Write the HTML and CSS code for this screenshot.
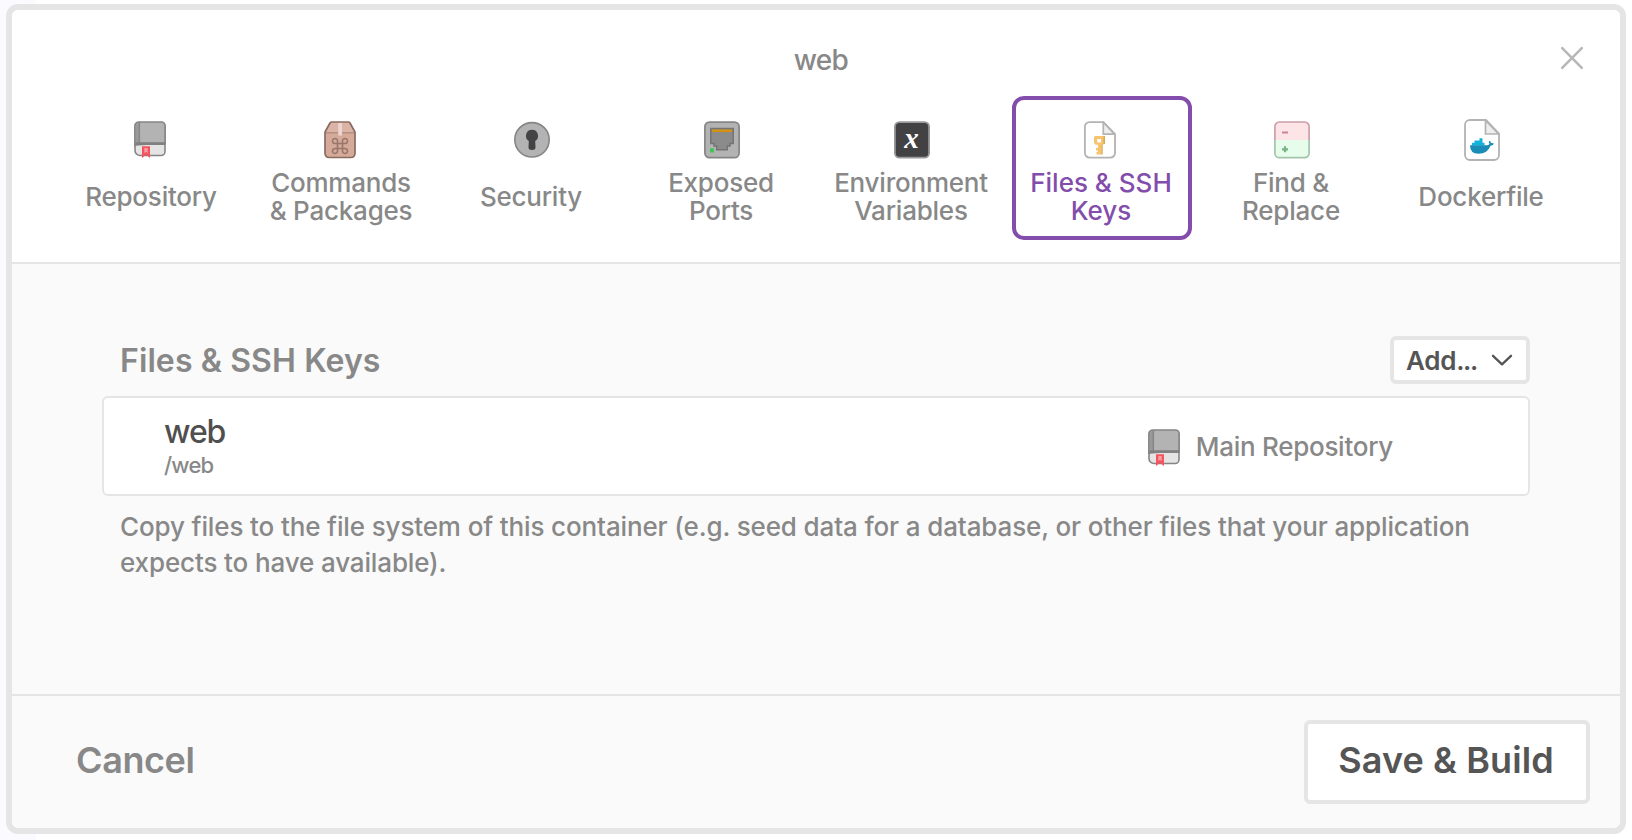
FILE: index.html
```html
<!DOCTYPE html>
<html lang="en">
<head>
<meta charset="utf-8">
<title>web</title>
<link rel="stylesheet" href="styles.css">
</head>
<body>
<svg class="defs" width="0" height="0" aria-hidden="true">
  <symbol id="book" viewBox="0 0 32 38">
    <path d="M1 24V29.500a5 5 0 0 0 5 5H27a4 4 0 0 0 4-4V22z" fill="#e4e4e4" stroke="#858585" stroke-width="1.600"/>
    <path d="M5 1H27.500a3.600 3.600 0 0 1 3.600 3.600V22.600H4.500Q2 22.600 .9 25V5A4 4 0 0 1 5 1z" fill="#b3b3b3" stroke="#858585" stroke-width="1.700"/>
    <path d="M2 4.500Q2.500 2 4.800 2V21.500L2 22.500z" fill="#999"/>
    <path d="M5.300 1V22" stroke="#858585" stroke-width="1.500"/>
    <path d="M1.500 22.600H31" stroke="#808080" stroke-width="2.600"/>
    <path d="M8 25.200H16V37L12 33.800 8 37z" fill="#f5535d"/>
    <path d="M10.300 27H13.700V32.300L12 30.800 10.300 32.300z" fill="#f7a0a4"/>
  </symbol>
</svg>
<main class="modal">
  <header class="head">
    <div class="bar">
      <h1 class="title">web</h1>
      <button class="close" aria-label="Close"><svg width="24" height="24" viewBox="0 0 24 24"><path d="M2.200 2.200L21.800 21.800M21.800 2.200L2.200 21.800" stroke="#b8b8b8" stroke-width="2.600" stroke-linecap="round"/></svg></button>
    </div>
    <nav class="tabs">
      <a class="tab"><span class="icon"><svg width="32" height="38"><use href="#book"/></svg></span><span class="label">Repository</span></a>
      <a class="tab"><span class="icon"><svg width="32" height="38" viewBox="0 0 32 38">
        <path d="M7 1H25L31 11.500V32.500a4 4 0 0 1-4 4H5a4 4 0 0 1-4-4V11.500z" fill="#d5aa99"/>
        <path d="M7 1H25L31 11.500H1z" fill="#dcb4a7"/>
        <path d="M1 11.800H31" stroke="#b58f82" stroke-width="1.500"/>
        <path d="M14.200 1.500h3.800V14.500h-3.800z" fill="#ecd5cd"/>
        <path d="M8 1H24.500Q25.500 1 26 2L31 11V32.500a4 4 0 0 1-4 4H5a4 4 0 0 1-4-4V11L6 2Q6.500 1 8 1z" fill="none" stroke="#8a6b61" stroke-width="1.700"/>
        <path d="M13.500 22.500h5v5h-5zM13.500 22.500h-2.400a2.500 2.500 0 1 1 2.400-2.500zM18.500 22.500V20a2.500 2.500 0 1 1 2.400 2.500zM18.500 27.500h2.400a2.500 2.500 0 1 1-2.400 2.500zM13.500 27.500V30a2.500 2.500 0 1 1-2.400-2.500z" fill="none" stroke="#98766b" stroke-width="1.600"/>
      </svg></span><span class="label">Commands<br>&amp; Packages</span></a>
      <a class="tab"><span class="icon"><svg width="36" height="38" viewBox="0 0 36 38">
        <circle cx="18" cy="18.800" r="17.200" fill="#b3b3b3" stroke="#858585" stroke-width="1.600"/>
        <path d="M18 8.800a6 6 0 0 1 3.200 11.100L21.500 26.500q0 2.500-3.500 2.500t-3.500-2.500L14.800 19.900A6 6 0 0 1 18 8.800z" fill="#434345"/>
      </svg></span><span class="label">Security</span></a>
      <a class="tab"><span class="icon"><svg width="36" height="38" viewBox="0 0 36 38">
        <rect x=".9" y="1.100" width="34.200" height="35.600" rx="4.500" fill="#b3b3b3" stroke="#858585" stroke-width="1.700"/>
        <path d="M6.800 7.500H29.200V22.500H26V25H23.300V28.800H12.700V25H10V22.500H6.800z" fill="#8b8b8b" stroke="#747474" stroke-width="1.500"/>
        <path d="M8 8.600H28v2.400H8z" fill="#d6920e"/><path d="M6 27.200h4v4.200H6z" fill="#3fc65b"/>
      </svg></span><span class="label">Exposed<br>Ports</span></a>
      <a class="tab"><span class="icon"><svg width="36" height="38" viewBox="0 0 36 38">
        <rect x=".9" y="1.100" width="34.200" height="35.600" rx="4.500" fill="#424244" stroke="#9a9a9b" stroke-width="1.800"/>
        <text class="glyph" x="17.500" y="27" text-anchor="middle">x</text>
      </svg></span><span class="label">Environment<br>Variables</span></a>
      <a class="tab active"><span class="icon"><svg width="32" height="38" viewBox="0 0 32 38">
        <path d="M5.500 1.100H19.500L31 13V32a4.600 4.600 0 0 1-4.600 4.600H5.500A4.600 4.600 0 0 1 .9 32V5.700A4.600 4.600 0 0 1 5.500 1.100z" fill="#fff" stroke="#b3b3b3" stroke-width="1.800"/>
        <path d="M19.300 1.500V13.200H30.600z" fill="#eee" stroke="#b3b3b3" stroke-width="1.700"/>
        <path d="M12 15H21V23H18.700V33.500H17V15z" fill="#d6a75b"/>
        <path d="M11 15H19.500V23.800H17.700V33.500H12.500V30.800H14V29.500H12V27H14V23.800H11.500L10 22V16z" fill="#f7c36d"/>
        <path d="M13.200 18h3.800v3.500h-3.800z" fill="#fff"/>
      </svg></span><span class="label">Files &amp; SSH<br>Keys</span></a>
      <a class="tab"><span class="icon"><svg width="36" height="38" viewBox="0 0 36 38">
        <path d="M.9 19V5.500A4.500 4.500 0 0 1 5.400 1H30.600a4.500 4.500 0 0 1 4.500 4.500V19" fill="#fde4e6" stroke="#cc9fa8" stroke-width="1.700"/>
        <path d="M.9 19V32.200a4.500 4.500 0 0 0 4.500 4.500H30.600a4.500 4.500 0 0 0 4.500-4.500V19" fill="#e7fdec" stroke="#a3c5aa" stroke-width="1.700"/>
        <path d="M8 11.600h6" stroke="#c98391" stroke-width="2"/><path d="M8 28.300h6M11 25.300v6" stroke="#79b284" stroke-width="2.200"/>
      </svg></span><span class="label">Find &amp;<br>Replace</span></a>
      <a class="tab"><span class="icon"><svg width="36" height="42" viewBox="0 0 36 42">
        <path d="M6 1H22L35 14.500V36a5 5 0 0 1-5 5H6a5 5 0 0 1-5-5V6a5 5 0 0 1 5-5z" fill="#fff" stroke="#b3b3b3" stroke-width="1.800"/>
        <path d="M21.500 1.500V15H34.600z" fill="#eee" stroke="#b3b3b3" stroke-width="1.700"/>
        <path d="M8 26.500V23.800H10.500V21.500H15.500V19.300H18.500V23.800H20.500V26.500z" fill="#12b2dc"/>
        <path d="M6 26.300H22.500Q25 26.300 25.500 24.800 24 22.500 25.300 21.800 26.800 22.500 27.100 24 29 23.800 30 24.800 28.700 26.700 26.500 26.800 23.500 34.800 14.500 34.800 6 34.800 6 26.300z" fill="#198cb8"/>
      </svg></span><span class="label">Dockerfile</span></a>
    </nav>
  </header>
  <section class="body">
    <div class="section-head">
      <h2 class="heading">Files &amp; SSH Keys</h2>
      <button class="add"><span>Add<span class="dots">...</span></span><svg width="22" height="14" viewBox="0 0 22 14"><path d="M2 2.800L11 11.300 20 2.800" fill="none" stroke="#555" stroke-width="2.300" stroke-linecap="round" stroke-linejoin="round"/></svg></button>
    </div>
    <div class="card">
      <div class="file"><div class="name">web</div><div class="path">/web</div></div>
      <div class="source"><svg width="32" height="38"><use href="#book"/></svg><span>Main Repository</span></div>
    </div>
    <p class="help">Copy files to the file system of this container (e.g. seed data for a database, or other files that your application<br>expects to have available).</p>
  </section>
  <footer class="foot">
    <button class="cancel">Cancel</button>
    <button class="save">Save &amp; Build</button>
  </footer>
</main>
</body>
</html>
```
FILE: styles.css
```css
* { box-sizing: border-box; }
body {
  margin: 0;
  height: 840px;
  padding: 4px 6px 6px;
  overflow: hidden;
  background: linear-gradient(90deg, #fbfaff 36px, #fff 36px);
  font-family: Inter, "Liberation Sans", sans-serif;
  font-size: 26px;
  font-weight: 500;
  letter-spacing: -0.22px;
  color: #888;
}
button { border: 0; padding: 0; background: none; font: inherit; color: inherit; letter-spacing: inherit; }
h1, h2, p { margin: 0; }
svg { display: block; flex: none; }
.defs { display: none; }
.modal {
  display: flex;
  flex-direction: column;
  width: 1620px;
  height: 830px;
  border: 6px solid #e5e5e5;
  border-radius: 12px;
  background: #fafafa;
  overflow: hidden;
}
.head { height: 254px; border-bottom: 2px solid #e5e5e5; background: #fff; }
.bar {
  display: grid;
  grid-template-columns: 1fr auto 1fr;
  height: 86px;
  padding: 10px 36px 0 46px;
  align-items: center;
}
.title { grid-column: 2; font-size: 28px; font-weight: 500; line-height: 34px; padding-top: 3px; letter-spacing: -0.7px; }
.close { justify-self: end; }
.tabs { display: flex; gap: 10px; padding-left: 50px; }
.tab {
  display: flex;
  flex-direction: column;
  align-items: center;
  width: 180px;
  height: 144px;
  border: 4px solid transparent;
  border-radius: 12px;
}
.tab.active { border-color: #834dab; color: #834dab; letter-spacing: 0; }
.icon { display: flex; align-items: center; width: 36px; height: 42px; margin-top: 19px; }
.label {
  display: flex;
  align-items: center;
  height: 56px;
  margin-top: 8px;
  padding-right: 2px;
  line-height: 28px;
  text-align: center;
  white-space: nowrap;
}
.glyph { font: italic bold 29px "Liberation Serif", serif; fill: #fff; letter-spacing: 0; }
.body { flex: none; height: 430px; padding: 72px 90px 0; }
.section-head { display: flex; justify-content: space-between; height: 60px; padding-left: 18px; }
.heading { font-size: 32px; font-weight: 600; line-height: 50px; letter-spacing: 0.1px; }
.add {
  display: flex;
  align-items: center;
  justify-content: space-between;
  width: 140px;
  height: 48px;
  padding: 0 13px 0 12px;
  border: 4px solid #e5e5e5;
  border-radius: 6px;
  background: #fff;
  color: #555;
  font-weight: 600;
}
.dots { letter-spacing: -1.5px; }
.card {
  display: flex;
  justify-content: space-between;
  align-items: center;
  height: 100px;
  padding: 0 135px 0 60px;
  border: 2px solid #e5e5e5;
  border-radius: 6px;
  background: #fff;
}
.name { font-size: 32px; font-weight: 450; line-height: 38px; color: #4f4f4f; letter-spacing: -1.1px; }
.path { font-size: 22px; line-height: 28px; letter-spacing: -0.8px; }
.source { display: flex; align-items: center; gap: 16px; letter-spacing: -0.28px; }
.source svg { margin-top: 4px; }
.help { padding: 13px 0 0 18px; line-height: 36px; letter-spacing: -0.13px; white-space: nowrap; }
.foot {
  display: flex;
  flex: 1;
  justify-content: space-between;
  align-items: flex-start;
  padding: 24px 30px 0 64px;
  border-top: 2px solid #e5e5e5;
  font-size: 36px;
  font-weight: 600;
}
.cancel { height: 84px; padding-bottom: 4px; letter-spacing: -0.4px; }
.save {
  width: 286px;
  height: 84px;
  padding: 0 2px 4px 0;
  border: 4px solid #e5e5e5;
  border-radius: 6px;
  background: #fff;
  color: #555;
  letter-spacing: 0.1px;
}
```
